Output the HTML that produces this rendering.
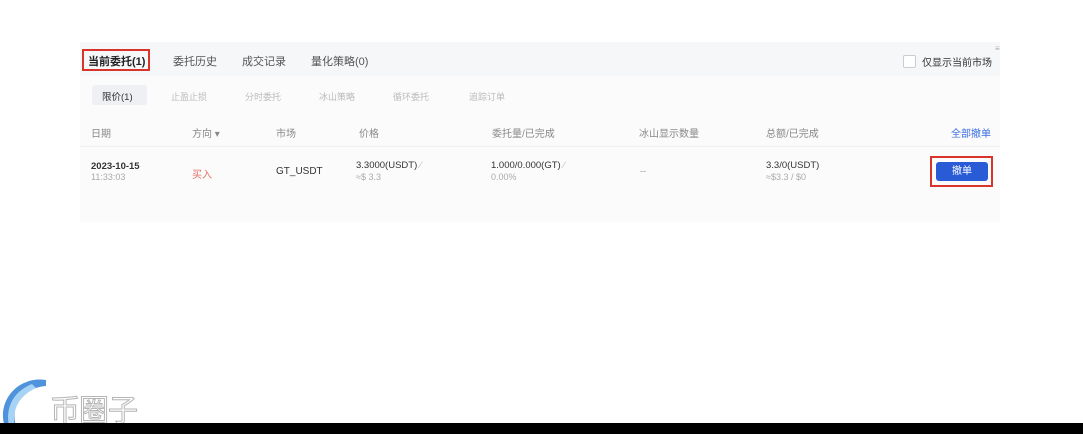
<!DOCTYPE html>
<html><head><meta charset="utf-8"><style>
body{margin:0;width:1083px;height:434px;background:#fff;position:relative;overflow:hidden;font-family:"Liberation Sans","Noto Sans CJK SC",sans-serif;}
.a{position:absolute;white-space:nowrap;}
.panel{position:absolute;left:80px;top:42px;width:920px;height:180px;background:#fbfbfc;}
.tabbar{position:absolute;left:80px;top:42px;width:920px;height:34px;background:#f6f7f9;}
.f11{font-size:11px;color:#333;}
.g{color:#888;font-size:10px;}
.l{color:#bbb;font-size:9px;}
</style></head><body>
<div class="panel"></div>
<div class="tabbar"></div>
<div class="a" style="left:82px;top:49px;width:68px;height:22px;border:2px solid #d9342b;box-sizing:border-box;"></div>
<div class="a" style="left:88px;top:53px;font-size:11px;font-weight:bold;color:#222;">当前委托(1)</div>
<div class="a f11" style="left:173px;top:53px;color:#555;">委托历史</div>
<div class="a f11" style="left:242px;top:53px;color:#555;">成交记录</div>
<div class="a f11" style="left:311px;top:53px;color:#555;">量化策略(0)</div>
<div class="a" style="left:903px;top:55px;width:11px;height:11px;border:1px solid #ccc;border-radius:2px;background:#fff;"></div>
<div class="a" style="left:922px;top:54px;font-size:10px;color:#333;">仅显示当前市场</div>
<div class="a" style="left:995px;top:44px;font-size:8px;color:#aaa;">≡</div>
<div class="a" style="left:92px;top:85px;width:55px;height:20px;background:#eef0f4;border-radius:3px;"></div>
<div class="a" style="left:102px;top:89px;font-size:9.5px;color:#333;">限价(1)</div>
<div class="a l" style="left:171px;top:90px;">止盈止损</div>
<div class="a l" style="left:245px;top:90px;">分时委托</div>
<div class="a l" style="left:319px;top:90px;">冰山策略</div>
<div class="a l" style="left:393px;top:90px;">循环委托</div>
<div class="a l" style="left:469px;top:90px;">追踪订单</div>
<div class="a g" style="left:91px;top:125px;">日期</div>
<div class="a g" style="left:192px;top:125px;">方向 ▾</div>
<div class="a g" style="left:276px;top:125px;">市场</div>
<div class="a g" style="left:359px;top:125px;">价格</div>
<div class="a g" style="left:492px;top:125px;">委托量/已完成</div>
<div class="a g" style="left:639px;top:125px;">冰山显示数量</div>
<div class="a g" style="left:766px;top:125px;">总额/已完成</div>
<div class="a" style="left:951px;top:125px;font-size:10px;color:#3a6fe0;">全部撤单</div>
<div class="a" style="left:80px;top:146px;width:920px;height:1px;background:#eef0f3;"></div>
<div class="a" style="left:91px;top:161px;font-size:9.5px;color:#333;font-weight:bold;">2023-10-15</div>
<div class="a" style="left:91px;top:172px;font-size:9px;color:#aaa;">11:33:03</div>
<div class="a" style="left:192px;top:166px;font-size:10px;color:#e57065;">买入</div>
<div class="a" style="left:276px;top:166px;font-size:10px;color:#333;">GT_USDT</div>
<div class="a" style="left:356px;top:160px;font-size:9.5px;color:#333;">3.3000(USDT) <span style="color:#bbb">⁄</span></div>
<div class="a" style="left:356px;top:172px;font-size:9px;color:#aaa;">≈$ 3.3</div>
<div class="a" style="left:491px;top:160px;font-size:9.5px;color:#333;">1.000/0.000(GT) <span style="color:#bbb">⁄</span></div>
<div class="a" style="left:491px;top:172px;font-size:9px;color:#aaa;">0.00%</div>
<div class="a" style="left:640px;top:166px;font-size:9px;color:#999;">--</div>
<div class="a" style="left:766px;top:160px;font-size:9.5px;color:#333;">3.3/0(USDT)</div>
<div class="a" style="left:766px;top:172px;font-size:9px;color:#aaa;">≈$3.3 / $0</div>
<div class="a" style="left:930px;top:156px;width:63px;height:31px;border:2px solid #d9342b;box-sizing:border-box;"></div>
<div class="a" style="left:936px;top:162px;width:52px;height:19px;background:#2a5bd7;border-radius:3px;color:#fff;font-size:10px;text-align:center;line-height:19px;">撤单</div>
<svg class="a" style="left:0;top:374px" width="60" height="60">
<path d="M46 6 C18 2 -2 26 4 50 L8 58 L18 58 C8 36 20 14 46 12 Z" fill="#4f93dc"/>
<path d="M32 10 C12 18 4 36 10 56 L16 58 C10 38 18 22 36 14 Z" fill="#a6d2f4"/>
</svg>
<div class="a" style="left:50px;top:386px;font-size:30px;color:#fff;-webkit-text-stroke:1px #b5b5b5;letter-spacing:-1px;">币圈子</div>
<div class="a" style="left:0;top:423px;width:1083px;height:11px;background:#000;"></div>
</body></html>
